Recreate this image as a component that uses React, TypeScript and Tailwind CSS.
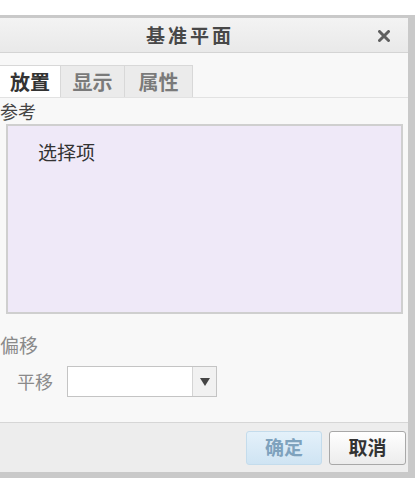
export default function App() {
  const font = { fontFamily: '"Noto Sans CJK SC", "Noto Sans", sans-serif' };
  return (
    <div className="w-[415px] h-[478px] bg-white pt-[15px] overflow-hidden" style={font}>
      <div className="flex flex-col h-[463px] border-t-[3px] border-r-[7px] border-b-[6px] border-[#c9c9c9] bg-[#f8f8f8]">
        {/* title bar */}
        <div className="relative h-[35px] shrink-0 flex items-center justify-center bg-gradient-to-b from-[#f3f3f3] to-[#e9e9e9] border-b border-[#d4d4d4]">
          <span className="text-[19px] font-bold text-[#484848] tracking-[3px] ml-[-28px]">基准平面</span>
          <svg className="absolute right-[18px] top-[12px]" width="12" height="12" viewBox="0 0 12 12">
            <path d="M1.5 1.5 L10.5 10.5 M10.5 1.5 L1.5 10.5" stroke="#606060" strokeWidth="3" strokeLinecap="round" />
          </svg>
        </div>

        <div className="flex-1 flex flex-col">
          {/* tabs */}
          <div className="flex mt-[12px] h-[33px] border-b border-[#e2e2e2]">
            <div className="w-[61px] flex items-center justify-center bg-white border-t border-r border-[#d8d8d8] text-[20px] font-bold text-[#333]">放置</div>
            <div className="w-[64px] flex items-center justify-center bg-[#ebebeb] border-t border-r border-[#d8d8d8] text-[20px] font-bold text-[#7a7a7a]">显示</div>
            <div className="w-[68px] flex items-center justify-center bg-[#ebebeb] border-t border-r border-[#d8d8d8] text-[20px] font-bold text-[#7a7a7a]">属性</div>
          </div>

          <div className="text-[18px] leading-[24px] text-[#444] mt-[1px]">参考</div>

          <div className="ml-[6px] mr-[5px] mt-[1px] h-[190px] bg-[#efe9f8] border-2 border-[#cfcfcf] pl-[30px] pt-[12px]">
            <span className="text-[19px] text-[#333]">选择项</span>
          </div>

          <div className="mt-[18px] text-[19px] leading-[26px] text-[#8a8a8a]">偏移</div>

          <div className="flex items-center mt-[8px] pl-[17px]">
            <span className="text-[18px] text-[#8a8a8a]">平移</span>
            <div className="ml-[14px] flex h-[31px] border border-[#c4c4c4]">
              <div className="w-[124px] bg-white"></div>
              <div className="w-[24px] bg-[#f1f1f1] border-l border-[#d4d4d4] flex items-center justify-center">
                <svg width="10" height="8" viewBox="0 0 10 8">
                  <path d="M0 0 L10 0 L5 8 Z" fill="#444" />
                </svg>
              </div>
            </div>
          </div>
        </div>

        {/* bottom buttons */}
        <div className="h-[50px] shrink-0 border-t border-[#d6d6d6] bg-[#ededed] flex items-center justify-end gap-[7px] pr-[2px]">
          <div className="w-[76px] h-[34px] flex items-center justify-center rounded-[3px] border border-[#c4dcec] bg-gradient-to-b from-[#e4f1fa] to-[#cfe4f3] text-[19px] font-bold text-[#7ea2bd]">确定</div>
          <div className="w-[77px] h-[34px] flex items-center justify-center rounded-[3px] border border-[#a8a8a8] bg-gradient-to-b from-[#ffffff] to-[#ececec] text-[19px] font-bold text-[#333]">取消</div>
        </div>
      </div>
    </div>
  );
}
